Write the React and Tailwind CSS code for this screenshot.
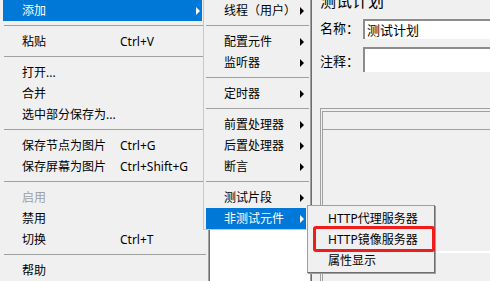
import React from "react";

const menu1 = [
  { label: "添加", arrow: true, active: true },
  { sep: true },
  { label: "粘贴", shortcut: "Ctrl+V" },
  { sep: true },
  { label: "打开..." },
  { label: "合并" },
  { label: "选中部分保存为..." },
  { sep: true },
  { label: "保存节点为图片", shortcut: "Ctrl+G" },
  { label: "保存屏幕为图片", shortcut: "Ctrl+Shift+G" },
  { sep: true },
  { label: "启用", disabled: true },
  { label: "禁用" },
  { label: "切换", shortcut: "Ctrl+T" },
  { sep: true },
  { label: "帮助" },
];

const menu2 = [
  { label: "线程（用户）", arrow: true },
  { sep: true },
  { label: "配置元件", arrow: true },
  { label: "监听器", arrow: true },
  { sep: true },
  { label: "定时器", arrow: true },
  { sep: true },
  { label: "前置处理器", arrow: true },
  { label: "后置处理器", arrow: true },
  { label: "断言", arrow: true },
  { sep: true },
  { label: "测试片段", arrow: true },
  { label: "非测试元件", arrow: true, active: true },
];

const menu3 = [{ label: "HTTP代理服务器" }, { label: "HTTP镜像服务器" }, { label: "属性显示" }];

const Arrow = ({ white }) => (
  <svg width="4" height="8" viewBox="0 0 4 8" className="absolute right-[2px] top-[7px]">
    <path d="M0 0L4 4L0 8Z" fill={white ? "#ffffff" : "#000000"} />
  </svg>
);

const MenuItems = ({ items, itemCls, textPl, labelW, sepCls }) =>
  items.map((it, i) =>
    it.sep ? (
      <div key={i} className={`h-[10px] pt-[4px] ${sepCls}`}>
        <div className="h-px bg-[#a0a0a0]" />
      </div>
    ) : (
      <div
        key={i}
        className={`relative flex h-[21px] items-center leading-[21px] ${itemCls} ${
          it.active ? "bg-[#0078d7] text-white" : it.disabled ? "text-[#a0a0a0]" : "text-black"
        }`}
        style={{ paddingLeft: textPl }}
      >
        <span className="shrink-0 whitespace-nowrap" style={labelW ? { width: labelW } : undefined}>
          {it.label}
        </span>
        {it.shortcut && <span className="whitespace-nowrap">{it.shortcut}</span>}
        {it.arrow && <Arrow white={it.active} />}
      </div>
    )
  );

export default function App() {
  return (
    <div className="relative flex h-[281px] w-[490px] overflow-hidden bg-[#f0f0f0] font-['Noto_Sans','Noto_Sans_CJK_SC',sans-serif] text-[12px] text-black">
      {/* background: tree panel + divider + properties panel */}
      <div className="w-[310px] shrink-0 bg-white" />
      <div className="w-[2px] shrink-0 border-l border-[#a0a0a0] bg-[#6d6d6d]" />
      <div className="flex min-w-0 flex-1 flex-col pl-[8px]">
        <div className="mt-[-7px] h-[17px] whitespace-nowrap text-[16px] leading-[17px]">测试计划</div>
        <div className="mt-[9px] flex h-[20px] items-center">
          <span className="w-[43px] shrink-0 text-[13px]">名称：</span>
          <div className="h-[20px] flex-1 whitespace-nowrap border-t-2 border-l-2 border-t-[#8c8c8c] border-l-[#8c8c8c] bg-white pl-[2px] text-[13px] leading-[18px]">
            测试计划
          </div>
        </div>
        <div className="mt-[8px] flex h-[25px] items-center">
          <span className="w-[43px] shrink-0 pt-[4px] text-[13px]">注释：</span>
          <div className="h-[25px] flex-1 border-t-2 border-l-2 border-t-[#8c8c8c] border-l-[#8c8c8c] bg-white" />
        </div>
        <div className="mt-[36px] flex-1 border-t border-l border-[#a0a0a0] pt-[2px] pl-px">
          <div className="h-full border-t border-l border-[#a0a0a0]">
            <div className="h-[18px] border-b border-[#a0a0a0]" />
            <div className="mt-[121px] h-[2px] bg-white" />
          </div>
        </div>
      </div>

      {/* context menu */}
      <div className="absolute left-0 top-[-3px] h-[300px] w-[209px] border-r border-[#a0a0a0] bg-[#f0f0f0] pt-[3px] pl-[3px] shadow-[1px_0_0_#707070]">
        <MenuItems items={menu1} itemCls="w-[199px]" textPl={19} labelW={98} sepCls="ml-px mr-[2px]" />
      </div>

      {/* add submenu */}
      <div className="absolute left-[203px] top-[-3px] w-[107px] border-l border-b border-[#c8c8c8] bg-[#f0f0f0] pt-[3px] pl-[2px]">
        <MenuItems items={menu2} itemCls="w-[100px]" textPl={18} sepCls="mr-px" />
      </div>

      {/* non-test elements submenu */}
      <div className="absolute left-[307px] top-[205px] w-[128px] border border-[#a0a0a0] border-r-[#6d6d6d] border-b-[#6d6d6d] bg-[#f0f0f0] pt-[2px] pb-px shadow-[1px_1px_0_#a0a0a0]">
        <MenuItems items={menu3} itemCls="w-full" textPl={20} />
      </div>

      {/* annotation */}
      <div className="absolute left-[313px] top-[226px] h-[26px] w-[122px] rounded-[3px] border-[3px] border-[#f01c1c]" />
    </div>
  );
}
